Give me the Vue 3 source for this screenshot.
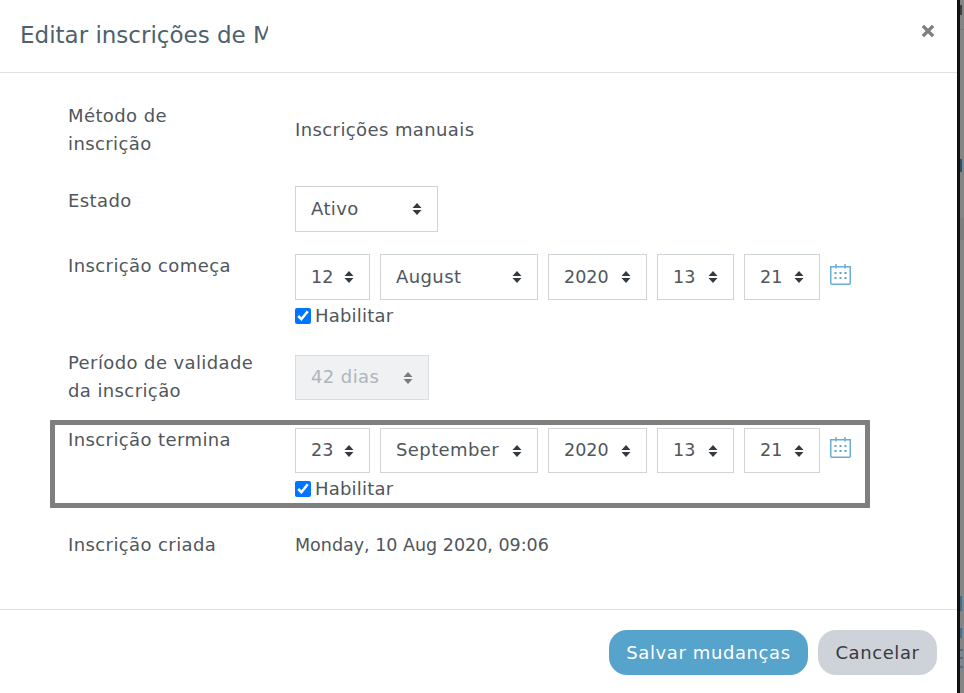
<template>
  <div class="page">
    <div class="modal">
      <header class="modal-header">
        <h5 class="modal-title">Editar inscrições de M</h5>
        <button class="close-btn" title="Fechar">
          <svg viewBox="0 0 14 14"><path d="M2.5 2.500l9 9M11.500 2.500l-9 9" /></svg>
        </button>
      </header>

      <div class="modal-body">
        <div class="form-row row-method">
          <div class="form-label">Método de inscrição</div>
          <div class="form-value">Inscrições manuais</div>
        </div>

        <div class="form-row row-state">
          <div class="form-label">Estado</div>
          <div class="fake-select state-select">
            <span>Ativo</span>
            <svg class="updown" viewBox="0 0 10 14"><path d="M5 1l4.500 5h-9zM5 13l-4.500-5h9z" /></svg>
          </div>
        </div>

        <div class="form-row row-date">
          <div class="form-label">Inscrição começa</div>
          <div class="date-field">
            <div class="date-selects">
              <div v-for="part in startParts" :key="part.cls" class="fake-select" :class="part.cls">
                <span>{{ part.text }}</span>
                <svg class="updown" viewBox="0 0 10 14"><path d="M5 1l4.500 5h-9zM5 13l-4.500-5h9z" /></svg>
              </div>
              <svg class="calendar" viewBox="0 0 21 21">
                <path class="cal-line" d="M.75 2.750h19.500v16.500a1 1 0 0 1-1 1H1.750a1 1 0 0 1-1-1zM6 0v4.500M15 0v4.500" />
                <path class="cal-dots" d="M4.500 8h2v2h-2zM9.500 8h2v2h-2zM14.500 8h2v2h-2zM4.500 13h2v2h-2zM9.500 13h2v2h-2zM14.500 13h2v2h-2z" />
              </svg>
            </div>
            <label class="check">
              <input type="checkbox" checked />
              <span>Habilitar</span>
            </label>
          </div>
        </div>

        <div class="form-row row-period">
          <div class="form-label">Período de validade da inscrição</div>
          <div class="fake-select period-select disabled">
            <span>42 dias</span>
            <svg class="updown" viewBox="0 0 10 14"><path d="M5 1l4.500 5h-9zM5 13l-4.500-5h9z" /></svg>
          </div>
        </div>

        <div class="form-row row-date row-highlight">
          <div class="form-label">Inscrição termina</div>
          <div class="date-field">
            <div class="date-selects">
              <div v-for="part in endParts" :key="part.cls" class="fake-select" :class="part.cls">
                <span>{{ part.text }}</span>
                <svg class="updown" viewBox="0 0 10 14"><path d="M5 1l4.500 5h-9zM5 13l-4.500-5h9z" /></svg>
              </div>
              <svg class="calendar" viewBox="0 0 21 21">
                <path class="cal-line" d="M.75 2.750h19.500v16.500a1 1 0 0 1-1 1H1.750a1 1 0 0 1-1-1zM6 0v4.500M15 0v4.500" />
                <path class="cal-dots" d="M4.500 8h2v2h-2zM9.500 8h2v2h-2zM14.500 8h2v2h-2zM4.500 13h2v2h-2zM9.500 13h2v2h-2zM14.500 13h2v2h-2z" />
              </svg>
            </div>
            <label class="check">
              <input type="checkbox" checked />
              <span>Habilitar</span>
            </label>
          </div>
        </div>

        <div class="form-row row-created">
          <div class="form-label">Inscrição criada</div>
          <div class="form-value created-value">Monday, 10 Aug 2020, 09:06</div>
        </div>
      </div>

      <footer class="modal-footer">
        <button class="btn btn-primary">Salvar mudanças</button>
        <button class="btn btn-secondary">Cancelar</button>
      </footer>
    </div>
    <div class="backdrop">
      <!-- bits of the page behind the dialog, seen through the dark overlay -->
      <span
        v-for="bit in backdropBits"
        :key="bit.top"
        class="backdrop-bit"
        :style="{ top: bit.top + 'px', height: bit.height + 'px', width: bit.width + 'px', background: bit.color }"
      ></span>
    </div>
  </div>
</template>

<script setup>
const startParts = [
  { cls: 'day', text: '12' },
  { cls: 'month', text: 'August' },
  { cls: 'year', text: '2020' },
  { cls: 'hour', text: '13' },
  { cls: 'minute', text: '21' }
]

const endParts = [
  { cls: 'day', text: '23' },
  { cls: 'month', text: 'September' },
  { cls: 'year', text: '2020' },
  { cls: 'hour', text: '13' },
  { cls: 'minute', text: '21' }
]

const backdropBits = [
  { top: 5, height: 10, width: 2, color: '#3d3d3d' },
  { top: 29, height: 1, width: 4, color: '#7a7a7a' },
  { top: 159, height: 13, width: 2, color: '#27506b' },
  { top: 218, height: 22, width: 4, color: '#7d7d7d' },
  { top: 596, height: 15, width: 2, color: '#3f6f8f' },
  { top: 628, height: 10, width: 2, color: '#3f7396' },
  { top: 649, height: 2, width: 3, color: '#3f7396' },
  { top: 657, height: 2, width: 3, color: '#3f7396' },
  { top: 666, height: 2, width: 3, color: '#3f7396' }
]
</script>

<style>
html, body {
  margin: 0;
  overflow: hidden;
}
</style>

<style scoped>
.page {
  display: flex;
  width: 964px;
  height: 693px;
  overflow: hidden;
  font-family: "DejaVu Sans", Inter, sans-serif;
  font-size: 18px;
  letter-spacing: 0.4px;
  color: #50565c;
}

.modal {
  display: flex;
  flex-direction: column;
  width: 957px;
  flex-shrink: 0;
  background: #fff;
  border-right: 3px solid #111;
}

.backdrop {
  position: relative;
  flex: 1;
  background: #858585;
}

.backdrop-bit {
  position: absolute;
  left: 0;
}

.modal-header {
  display: flex;
  justify-content: space-between;
  align-items: flex-start;
  height: 72px;
  border-bottom: 1px solid #dee2e6;
}

.modal-title {
  width: 248px;
  margin: 20px 0 0 20px;
  overflow: hidden;
  white-space: nowrap;
  font-size: 23px;
  letter-spacing: 0;
  line-height: 30px;
  font-weight: 400;
  color: #4d626d;
}

.close-btn {
  width: 16px;
  height: 16px;
  margin: 23px 21px 0 0;
  padding: 0;
  border: none;
  background: none;
}

.close-btn svg {
  display: block;
  width: 16px;
  height: 16px;
  fill: none;
  stroke: #7f7f7f;
  stroke-width: 3;
}

.modal-body {
  flex: 1;
  padding: 29px 0 0 55px;
}

.form-row {
  display: flex;
  width: 810px;
  padding-left: 13px;
  box-sizing: border-box;
}

.form-label {
  width: 227px;
  flex-shrink: 0;
  padding-right: 40px;
  box-sizing: border-box;
  line-height: 28px;
}

.form-value {
  line-height: 28px;
}

.created-value {
  font-size: 17.5px;
  letter-spacing: 0;
}

.row-method {
  height: 84px;
}

.row-method .form-value {
  margin-top: 14px;
}

.row-state {
  height: 68px;
}

.row-state .form-label {
  margin-top: 1px;
}

.row-date {
  height: 101px;
}

.row-date .form-label {
  margin-top: -2px;
}

.row-period {
  height: 70px;
}

.row-period .form-label {
  margin-top: -6px;
}

.row-highlight {
  height: 78px;
  padding-top: 3px;
  outline: 5px solid #7f7f7f;
}

.row-highlight .fake-select {
  height: 45px;
}

.row-created {
  margin-top: 28px;
}

.fake-select {
  display: flex;
  align-items: center;
  justify-content: space-between;
  height: 46px;
  padding: 0 15px;
  box-sizing: border-box;
  border: 1px solid #ced4da;
  background: #fff;
  white-space: nowrap;
}

.fake-select span {
  line-height: 20px;
  margin-top: -1px;
}

.updown {
  width: 10px;
  height: 14px;
  flex-shrink: 0;
  fill: #343a40;
}

.state-select {
  width: 143px;
}

.period-select {
  width: 134px;
  height: 45px;
}

.disabled {
  background: #eff1f3;
  border-color: #d9dde1;
  color: #adb5bd;
}

.disabled .updown {
  fill: #7a7d80;
}

.date-selects {
  display: flex;
  align-items: center;
  gap: 10px;
}

.day,
.year,
.hour,
.minute {
  font-size: 17.5px;
  letter-spacing: 0;
}

.day {
  width: 75px;
}

.month {
  width: 158px;
}

.year {
  width: 99px;
}

.hour {
  width: 77px;
}

.minute {
  width: 76px;
}

.calendar {
  width: 21px;
  height: 21px;
  margin-top: -6px;
  flex-shrink: 0;
}

.cal-line {
  fill: none;
  stroke: #6aadd2;
  stroke-width: 1.5;
}

.cal-dots {
  fill: #5ba4cc;
}

.check {
  display: flex;
  align-items: center;
  gap: 4px;
  margin-top: 5px;
  line-height: 22px;
  letter-spacing: 0.2px;
}

.check input {
  width: 16px;
  height: 16px;
  margin: 0;
  accent-color: #0075ff;
}

.modal-footer {
  display: flex;
  justify-content: flex-end;
  gap: 10px;
  height: 84px;
  padding: 20px 20px 0 0;
  box-sizing: border-box;
  border-top: 1px solid #dee2e6;
}

.btn {
  height: 45px;
  padding: 0;
  border: none;
  border-radius: 18px;
  font: inherit;
  letter-spacing: 0.6px;
}

.btn-primary {
  width: 199px;
  background: #56a3cc;
  color: #fff;
}

.btn-secondary {
  width: 119px;
  background: #ced3da;
  color: #373a3c;
}
</style>
